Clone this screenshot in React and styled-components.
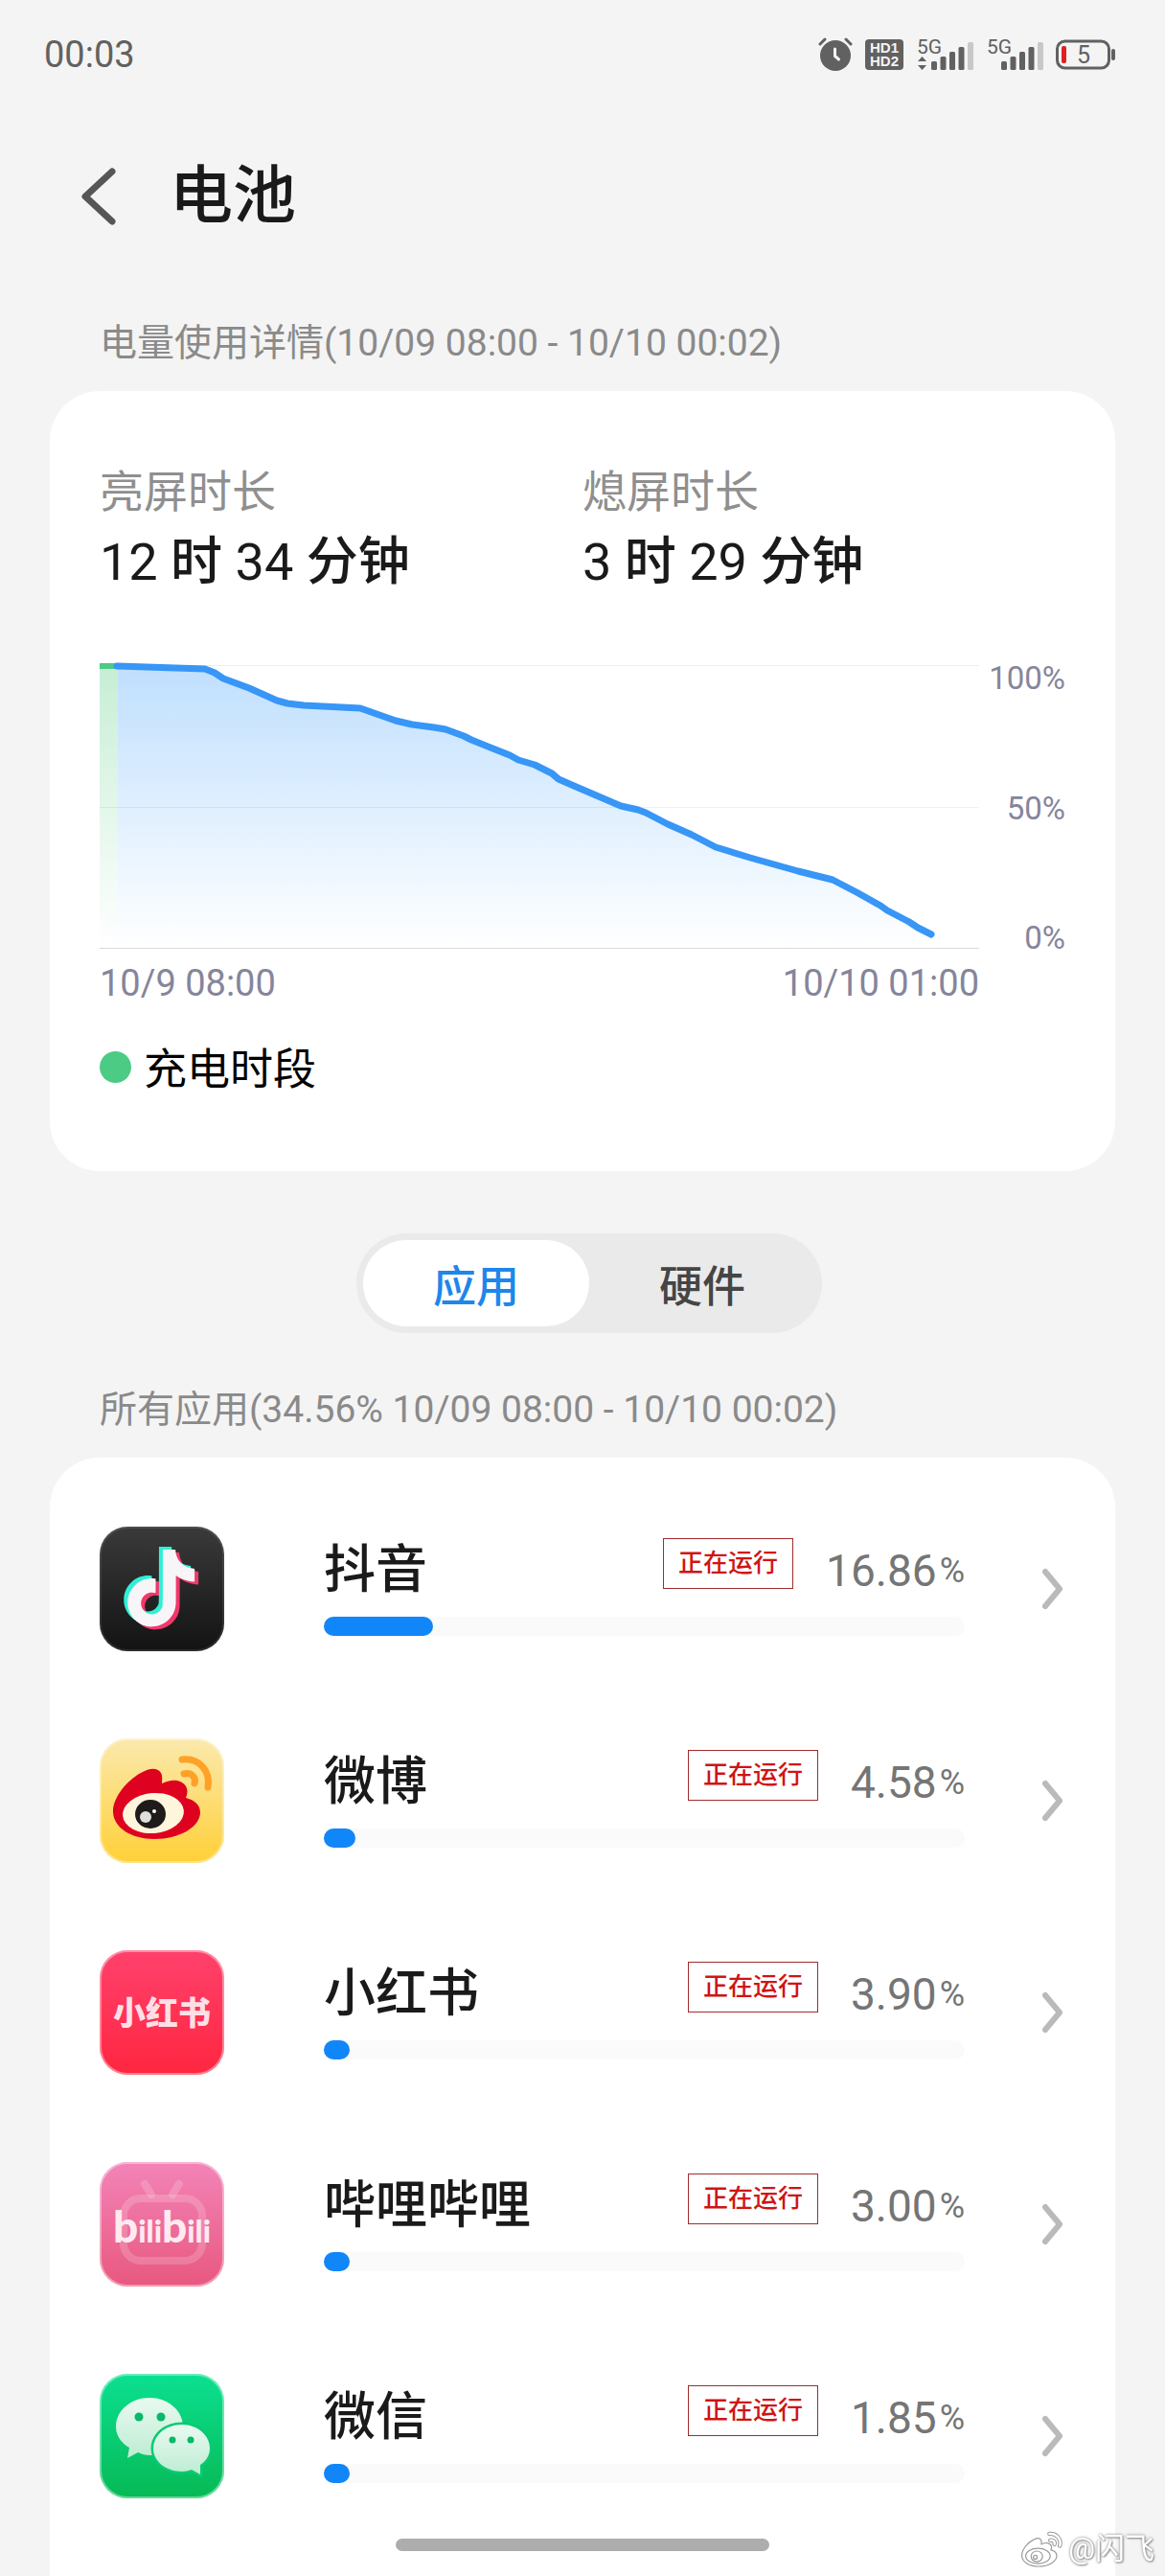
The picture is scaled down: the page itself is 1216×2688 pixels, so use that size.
import React, { useState } from "react";
import styled, { createGlobalStyle } from "styled-components";

const GlobalStyle = createGlobalStyle`
  * {
    box-sizing: border-box;
  }

  body {
    margin: 0;
    background: #f4f4f4;
    color: #1a1a1a;
    font-family: Roboto, "Noto Sans CJK SC", sans-serif;
  }

  button {
    font-family: inherit;
    border: none;
    padding: 0;
    background: none;
    cursor: pointer;
  }

  svg {
    display: block;
    flex: none;
  }
`;

const Page = styled.div`
  min-height: 100vh;
  display: flex;
  flex-direction: column;
`;

const StatusBar = styled.div`
  height: 114px;
  padding: 0 52px 0 46px;
  display: flex;
  align-items: center;
  justify-content: space-between;
`;

const Clock = styled.span`
  font-size: 38px;
  color: #616161;
`;

const StatusIcons = styled.div`
  display: flex;
  align-items: center;
  gap: 13px;
`;

const HdBadge = styled.span`
  width: 40px;
  height: 32px;
  padding: 2px 0;
  border-radius: 4px;
  background: #616161;
  color: #f4f4f4;
  font: bold 15px/14px "Liberation Sans", sans-serif;
  text-align: center;
`;

const Header = styled.header`
  height: 182px;
  padding-left: 83px;
  display: flex;
  align-items: center;
  gap: 54px;
`;

const Title = styled.h1`
  margin: 0;
  font-size: 66px;
  font-weight: 500;
  line-height: 80px;
`;

const SectionLabel = styled.h2`
  margin: 0;
  padding: ${({ $top }) => $top}px 52px 25px 104px;
  font-size: 39px;
  font-weight: 400;
  line-height: 50px;
  color: #8a8a8a;
`;

const Card = styled.section`
  margin: 0 52px;
  background: #fff;
  border-radius: 52px;
`;

const UsageCard = styled(Card)`
  padding: 75px 52px 79px;
`;

const Durations = styled.div`
  display: grid;
  grid-template-columns: 1fr 1fr;
  margin-bottom: 65px;
`;

const DurationLabel = styled.div`
  font-size: 46px;
  line-height: 60px;
  color: #8f8f8f;
`;

const DurationValue = styled.div`
  margin-top: 8px;
  font-size: 54px;
  font-weight: 500;
  line-height: 72px;
`;

const Digits = styled.span`
  font-weight: 400;
`;

const Chart = styled.div`
  display: grid;
  grid-template-columns: 1fr 90px;
  row-gap: 5px;
  color: #85859b;
`;

const Plot = styled.svg`
  width: 100%;
  height: 302px;
  overflow: visible;
`;

const Scale = styled.div`
  height: 311px;
  display: flex;
  flex-direction: column;
  align-items: flex-end;
  justify-content: space-between;
  font-size: 33px;
  line-height: 40px;
`;

const Dates = styled.div`
  display: flex;
  justify-content: space-between;
  font-size: 38px;
  line-height: 44px;
`;

const Legend = styled.div`
  margin-top: 35px;
  display: flex;
  align-items: center;
  gap: 13px;
  font-family: "Noto Sans CJK SC", sans-serif;
  font-size: 45px;
  line-height: 60px;
  color: #000;
`;

const Dot = styled.span`
  width: 33px;
  height: 33px;
  border-radius: 50%;
  background: #4ccb85;
`;

const Tabs = styled.div`
  align-self: center;
  width: 486px;
  height: 104px;
  margin: 65px 0 0 14px;
  padding: 7px;
  display: flex;
  border-radius: 52px;
  background: #eaeaea;
`;

const Tab = styled.button`
  flex: 1;
  border-radius: 46px;
  background: ${({ $active }) => ($active ? "#fff" : "transparent")};
  color: ${({ $active }) => ($active ? "#1f86ea" : "#454545")};
  font-size: 45px;
  font-weight: 500;
`;

const AppsCard = styled(Card)`
  flex: 1;
  padding: 26px 52px 36px;
  border-radius: 52px 52px 0 0;
`;

const AppList = styled.ul`
  margin: 0;
  padding: 0;
  list-style: none;
`;

const AppRow = styled.a`
  height: 221px;
  display: flex;
  align-items: center;
  color: inherit;
  text-decoration: none;
`;

const AppInfo = styled.div`
  flex: 1;
  margin: 0 81px 0 104px;
`;

const AppLine = styled.div`
  height: 60px;
  margin-bottom: 18px;
  display: flex;
  align-items: center;
`;

const AppName = styled.span`
  flex: 1;
  font-size: 54px;
  font-weight: 500;
  line-height: 60px;
`;

const Running = styled.span`
  margin-bottom: 14px;
  padding: 0 15px;
  border: 1px solid #a02c2c;
  color: #d01414;
  font-size: 26px;
  font-weight: 500;
  line-height: 51px;
`;

const Percent = styled.span`
  margin-left: 34px;
  display: flex;
  align-items: center;
  gap: 3px;
  font-size: 46px;
  line-height: 60px;
  color: #757575;

  small {
    font-size: 36px;
  }
`;

const Track = styled.div`
  height: 20px;
  border-radius: 10px;
  background: #fafafa;
`;

const Fill = styled.div`
  height: 100%;
  min-width: 27px;
  border-radius: 10px;
  background: #1186f8;
`;

const HomeIndicator = styled.div`
  position: fixed;
  bottom: 26px;
  left: 50%;
  width: 390px;
  height: 13px;
  margin-left: -195px;
  border-radius: 7px;
  background: #adadad;
`;

const Watermark = styled.div`
  position: fixed;
  right: 11px;
  bottom: 6px;
  display: flex;
  align-items: center;
  gap: 6px;
  color: #fff;
  font-size: 31px;
  line-height: 44px;
  text-shadow: 0 0 3px #777, 1px 1px 2px #999;
`;

const AlarmIcon = () => (
  <svg width="36" height="36" viewBox="0 0 36 36">
    <circle cx="18" cy="19" r="16" fill="#616161" />
    <g fill="none" strokeLinecap="round">
      <path d="M2 7L7 2M34 7L29 2" stroke="#616161" strokeWidth="3" />
      <path d="M17.500 12V19.500L21.500 23" stroke="#f4f4f4" strokeWidth="3" />
    </g>
  </svg>
);

const SignalIcon = ({ arrows }) => (
  <svg width="60" height="48" viewBox="-2 -6 60 48">
    <text x="-1" y="17" fontSize="21" fill="#616161">
      5G
    </text>
    {arrows && (
      <path d="M0 25H9L4.500 20ZM0 29H9L4.500 34Z" fill="#616161" />
    )}
    {[0, 1, 2, 3, 4].map((bar) => (
      <rect
        key={bar}
        x={14 + bar * 9.5}
        y={25 - bar * 5}
        width="6"
        height={9 + bar * 5}
        rx="1.500"
        fill={bar === 4 ? "#c8c8c8" : "#616161"}
      />
    ))}
  </svg>
);

const BatteryIcon = () => (
  <svg width="62" height="32" viewBox="0 0 62 32">
    <rect x="1.500" y="2" width="54" height="28" rx="8" fill="none" stroke="#616161" strokeWidth="3" />
    <rect x="58" y="10" width="4" height="12" rx="2" fill="#616161" />
    <rect x="6" y="7" width="5" height="18" rx="2" fill="#e02020" />
    <text x="29" y="25" fontSize="25" textAnchor="middle" fill="#616161">
      5
    </text>
  </svg>
);

const BackIcon = () => (
  <svg width="40" height="62" viewBox="0 0 40 62" fill="none" stroke="#565656" strokeWidth="7" strokeLinecap="round" strokeLinejoin="round">
    <path d="M34 5L6 31L34 57" />
  </svg>
);

const ChevronIcon = () => (
  <svg width="24" height="44" viewBox="0 0 24 44" fill="none" stroke="#bababa" strokeWidth="6" strokeLinecap="round" strokeLinejoin="round">
    <path d="M3 4L18 22L3 40" />
  </svg>
);

const NOTE =
  "M12.525.02c1.31-.02 2.61-.01 3.91-.02.08 1.53.63 3.09 1.75 4.17 1.12 1.11 2.7 1.62 4.24 1.79v4.03c-1.44-.05-2.89-.35-4.2-.97-.57-.26-1.1-.59-1.62-.93-.01 2.92.01 5.84-.02 8.75-.08 1.4-.54 2.79-1.35 3.94-1.31 1.92-3.58 3.17-5.91 3.21-1.43.08-2.86-.31-4.08-1.03-2.02-1.19-3.44-3.37-3.65-5.71-.02-.5-.03-1-.01-1.49.18-1.9 1.12-3.72 2.58-4.96 1.66-1.44 3.98-2.13 6.15-1.72.02 1.48-.04 2.96-.04 4.44-.99-.32-2.15-.23-3.02.37-.63.41-1.11 1.04-1.36 1.75-.21.51-.15 1.07-.14 1.61.24 1.64 1.82 3.02 3.5 2.87 1.12-.01 2.19-.66 2.77-1.61.19-.33.4-.67.41-1.06.1-1.79.06-3.57.07-5.36.01-4.03-.01-8.05.02-12.07z";

// rounded tile with a vertical gradient and a thin light rim
const Tile = ({ id, from, to, rim = 0.4, children }) => (
  <svg width="130" height="130" viewBox="0 0 130 130">
    <defs>
      <linearGradient id={id} x1="0" y1="0" x2="0" y2="1">
        <stop offset="0" stopColor={from} />
        <stop offset="1" stopColor={to} />
      </linearGradient>
    </defs>
    <rect width="130" height="130" rx="29" fill={`url(#${id})`} />
    <rect x="1" y="1" width="128" height="128" rx="28" fill="none" stroke="#fff" strokeOpacity={rim} strokeWidth="2" />
    {children}
  </svg>
);

const DouyinIcon = () => (
  <Tile id="douyin" from="#3a3a3a" to="#131313" rim={0.1}>
    <g transform="translate(28 27) scale(3.350)">
      <path d={NOTE} fill="#f0386b" />
    </g>
    <g transform="translate(20 21) scale(3.350)">
      <path d={NOTE} fill="#2ff0d6" />
    </g>
    <g transform="translate(24 24) scale(3.350)">
      <path d={NOTE} fill="#f7f5f7" />
    </g>
  </Tile>
);

const WEIBO_BODY =
  "M43 36C52 31 60 30 64 36C66 40 65 44 65 47C70 45 75 43 81 44C90 46 94 53 90 62C98 64 105 69 105 77C105 92 84 105 57 105C33 105 14 93 14 76C14 62 28 44 43 36Z";

const WeiboIcon = () => (
  <Tile id="weibo" from="#fbe9ae" to="#ffd038">
    <path d={WEIBO_BODY} fill="#df0220" />
    <ellipse cx="56" cy="78" rx="32" ry="21" transform="rotate(-5 56 78)" fill="#fdf5dc" />
    <ellipse cx="53" cy="79" rx="16" ry="15" fill="#1f1b1b" />
    <circle cx="48" cy="82" r="6" fill="#dedede" />
    <circle cx="57" cy="76" r="2" fill="#fff" />
    <g fill="none" stroke="#ffa126" strokeWidth="7" strokeLinecap="round">
      <path d="M86 22C104 20 116 34 113 51" />
      <path d="M88 37C96 35 101 41 99 47" />
    </g>
  </Tile>
);

const XiaohongshuIcon = () => (
  <Tile id="xiaohongshu" from="#ff416c" to="#ff2640">
    <text x="65" y="78" fontSize="34" fontWeight="900" fontFamily="Noto Sans CJK SC, sans-serif" textAnchor="middle" fill="#ffdfe6">
      小红书
    </text>
  </Tile>
);

const BilibiliIcon = () => (
  <Tile id="bilibili" from="#f384b8" to="#e8587f">
    <g fill="none" stroke="#fff" strokeOpacity="0.180">
      <rect x="25" y="38" width="82" height="65" rx="18" strokeWidth="8" />
      <path d="M47 23L54 34M83 23L76 34" strokeWidth="8" strokeLinecap="round" />
    </g>
    <text x="65" y="84" fontSize="46" fontWeight="900" fontFamily="Lato, sans-serif" textAnchor="middle" fill="#ffeaf1">
      b<tspan fontSize="32">ili</tspan>b<tspan fontSize="32">ili</tspan>
    </text>
  </Tile>
);

const WechatIcon = () => (
  <Tile id="wechat" from="#0be091" to="#07b955">
    <defs>
      <linearGradient id="bubble" x1="0" y1="0" x2="0" y2="1">
        <stop offset="0" stopColor="#e9faf1" />
        <stop offset="1" stopColor="#bdecd2" />
      </linearGradient>
    </defs>
    <path d="M52 25C71 25 87 38 87 55C87 71 71 85 52 85C48 85 44 84 40 82L29 88L31 77C22 72 17 64 17 55C17 38 33 25 52 25Z" fill="url(#bubble)" />
    <path d="M86 53C102 53 115 64 115 78C115 85 111 91 105 95V105L96 100C93 101 89 102 86 102C69 102 56 91 56 78C56 64 69 53 86 53Z" fill="url(#bubble)" stroke="#08cb73" strokeWidth="5" paintOrder="stroke" />
    <g fill="#07b968">
      <circle cx="41" cy="45" r="4.500" />
      <circle cx="64" cy="45" r="4.500" />
      <circle cx="76" cy="69" r="3.500" />
      <circle cx="95" cy="69" r="3.500" />
    </g>
  </Tile>
);

const WatermarkIcon = () => (
  <svg width="44" height="40" viewBox="10 12 110 96">
    <g fill="#fff" stroke="#9a9a9a" strokeWidth="3">
      <path d={WEIBO_BODY} />
      <ellipse cx="56" cy="78" rx="32" ry="20" />
      <ellipse cx="53" cy="79" rx="15" ry="14" />
      <circle cx="49" cy="81" r="5" />
    </g>
    <g fill="none" strokeLinecap="round">
      <path d="M86 20C104 18 118 34 113 51M88 37C96 35 101 41 99 47" stroke="#9a9a9a" strokeWidth="11" />
      <path d="M86 20C104 18 118 34 113 51M88 37C96 35 101 41 99 47" stroke="#fff" strokeWidth="6" />
    </g>
  </svg>
);

const levels = [
  [18, 7], [110, 10], [120, 14], [129, 20], [156, 30], [185, 43], [196, 46],
  [213, 48], [272, 51], [309, 64], [326, 68], [349, 71], [361, 73], [380, 80],
  [388, 84], [428, 100], [437, 105], [454, 110], [472, 119], [479, 125],
  [495, 132], [516, 141], [544, 153], [562, 157], [570, 160], [593, 172],
  [618, 183], [643, 196], [679, 207], [729, 221], [765, 230], [790, 243],
  [815, 257], [822, 262], [845, 274], [854, 280], [868, 287],
];

const apps = [
  { name: "抖音", value: "16.86", Icon: DouyinIcon },
  { name: "微博", value: "4.58", Icon: WeiboIcon },
  { name: "小红书", value: "3.90", Icon: XiaohongshuIcon },
  { name: "哔哩哔哩", value: "3.00", Icon: BilibiliIcon },
  { name: "微信", value: "1.85", Icon: WechatIcon },
];

const BatteryChart = () => {
  const line = levels.map((point) => point.join(" ")).join("L");

  return (
    <Chart>
      <Plot viewBox="0 0 918 302" preserveAspectRatio="none">
        <defs>
          <linearGradient id="drain" gradientUnits="userSpaceOnUse" x1="0" y1="6" x2="0" y2="300">
            <stop offset="0" stopColor="#bfdffe" />
            <stop offset="1" stopColor="#fff" />
          </linearGradient>
          <linearGradient id="charge" gradientUnits="userSpaceOnUse" x1="0" y1="6" x2="0" y2="300">
            <stop offset="0" stopColor="#c6eed5" />
            <stop offset="1" stopColor="#fff" />
          </linearGradient>
        </defs>
        <rect y="7" width="19" height="294" fill="url(#charge)" />
        <path d={`M19 301V7L${line}V301Z`} fill="url(#drain)" />
        <g fill="#000">
          <rect y="6" width="918" height="1" fillOpacity="0.070" />
          <rect y="154" width="918" height="1" fillOpacity="0.060" />
          <rect y="301" width="918" height="1" fillOpacity="0.150" />
        </g>
        <rect y="4" width="19" height="6" fill="#4ccb85" />
        <path d={`M${line}`} fill="none" stroke="#3796f6" strokeWidth="7" strokeLinecap="round" strokeLinejoin="round" />
      </Plot>
      <Scale>
        <span>100%</span>
        <span>50%</span>
        <span>0%</span>
      </Scale>
      <Dates>
        <span>10/9 08:00</span>
        <span>10/10 01:00</span>
      </Dates>
    </Chart>
  );
};

const App = () => {
  const [tab, setTab] = useState("应用");

  return (
    <Page>
      <GlobalStyle />
      <StatusBar>
        <Clock>00:03</Clock>
        <StatusIcons>
          <AlarmIcon />
          <HdBadge>
            HD1
            <br />
            HD2
          </HdBadge>
          <SignalIcon arrows />
          <SignalIcon />
          <BatteryIcon />
        </StatusIcons>
      </StatusBar>

      <Header>
        <button aria-label="返回">
          <BackIcon />
        </button>
        <Title>电池</Title>
      </Header>

      <SectionLabel $top={37}>
        电量使用详情(10/09 08:00 - 10/10 00:02)
      </SectionLabel>
      <UsageCard>
        <Durations>
          <div>
            <DurationLabel>亮屏时长</DurationLabel>
            <DurationValue>
              <Digits>12</Digits> 时 <Digits>34</Digits> 分钟
            </DurationValue>
          </div>
          <div>
            <DurationLabel>熄屏时长</DurationLabel>
            <DurationValue>
              <Digits>3</Digits> 时 <Digits>29</Digits> 分钟
            </DurationValue>
          </div>
        </Durations>
        <BatteryChart />
        <Legend>
          <Dot />
          充电时段
        </Legend>
      </UsageCard>

      <Tabs role="tablist">
        {["应用", "硬件"].map((name) => (
          <Tab
            key={name}
            role="tab"
            aria-selected={tab === name}
            $active={tab === name}
            onClick={() => setTab(name)}
          >
            {name}
          </Tab>
        ))}
      </Tabs>

      <SectionLabel $top={55}>
        所有应用(34.56% 10/09 08:00 - 10/10 00:02)
      </SectionLabel>
      <AppsCard>
        <AppList>
          {apps.map(({ name, value, Icon }) => (
            <li key={name}>
              <AppRow href="#">
                <Icon />
                <AppInfo>
                  <AppLine>
                    <AppName>{name}</AppName>
                    <Running>正在运行</Running>
                    <Percent>
                      {value}
                      <small>%</small>
                    </Percent>
                  </AppLine>
                  <Track>
                    <Fill style={{ width: `${Math.ceil(value)}%` }} />
                  </Track>
                </AppInfo>
                <ChevronIcon />
              </AppRow>
            </li>
          ))}
        </AppList>
      </AppsCard>

      <HomeIndicator />
      <Watermark>
        <WatermarkIcon />
        @闪飞
      </Watermark>
    </Page>
  );
};

export default App;
